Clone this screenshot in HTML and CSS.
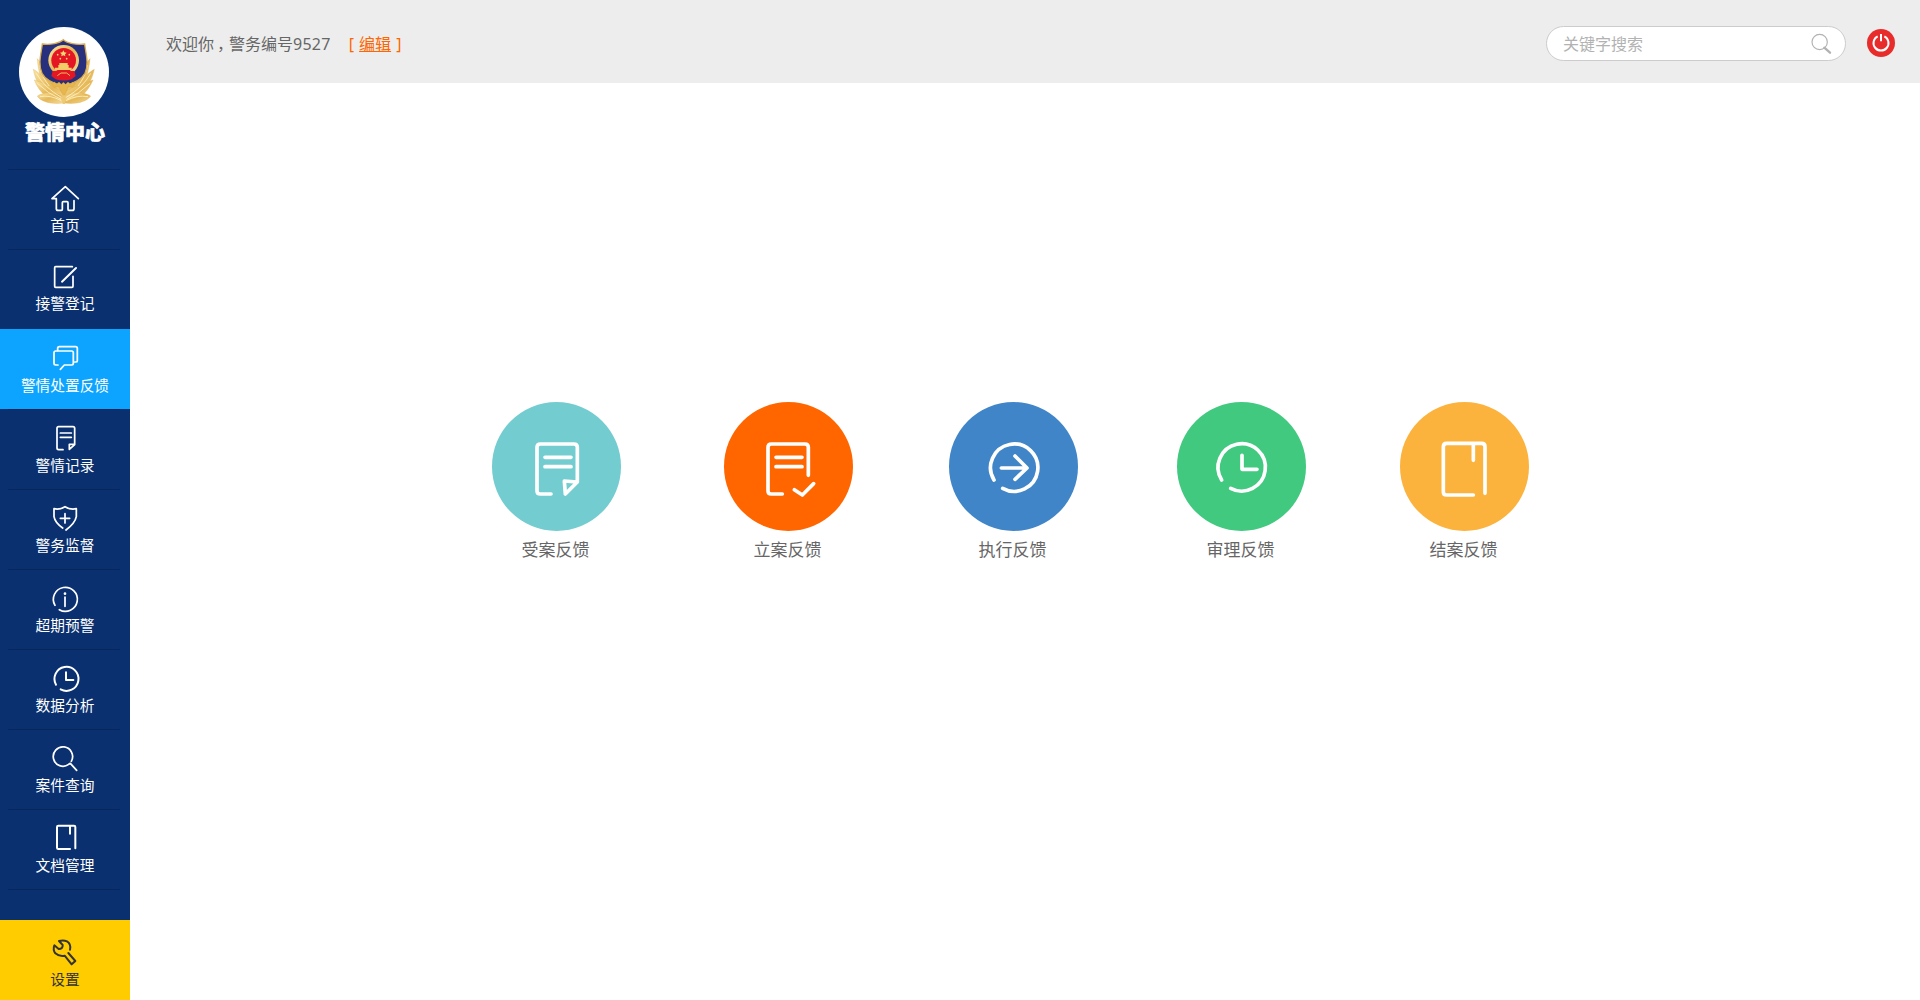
FILE: index.html
```html
<!DOCTYPE html>
<html lang="zh-CN">
<head>
<meta charset="utf-8">
<title>警情中心</title>
<link rel="stylesheet" href="styles.css">
</head>
<body>
<div class="app">
  <aside class="sidebar">
    <div class="brand">
      <svg class="emblem" viewBox="57 81 270 270">
        <defs>
          <linearGradient id="gold" x1="0" y1="0" x2="1" y2="1">
            <stop offset="0" stop-color="#fae6a6"/><stop offset=".5" stop-color="#e6b858"/><stop offset="1" stop-color="#f6dc98"/>
          </linearGradient>
        </defs>
        <circle cx="192" cy="216" r="135" fill="#fff"/>
        <g fill="url(#gold)" stroke="#dcab50" stroke-width="1">
          <path d="M190 304C158 300 118 262 112 176C130 192 134 222 150 240L190 262Z"/>
          <path d="M192 304C224 300 262 262 270 176C252 192 246 222 232 240L192 262Z"/>
          <path d="M190 308C152 302 112 272 100 208C120 218 136 246 190 268Z"/>
          <path d="M192 308C230 302 268 272 283 208C262 218 246 246 192 268Z"/>
          <path d="M190 306C150 306 118 280 103 240C130 250 160 258 190 276Z"/>
          <path d="M192 306C232 306 262 280 279 240C252 250 224 258 192 276Z"/>
          <path d="M190 309C158 314 122 306 112 288C132 276 164 274 190 290Z"/>
          <path d="M192 309C226 314 260 306 272 288C250 276 218 274 192 290Z"/>
        </g>
        <g fill="none" stroke="#fff3c8" stroke-width="2.500">
          <path d="M109 220Q132 262 184 292M272 220Q249 262 199 292M112 250Q145 282 183 298M270 250Q237 282 200 298M118 195Q125 232 148 258M263 195Q255 232 234 258M120 290Q150 284 184 302M264 290Q232 284 198 302"/>
        </g>
        <path d="M190 119C178 130 152 135 127 132C124 160 113 190 126 220C136 240 160 248 190 260C220 248 244 240 255 220C268 190 257 160 254 132C229 135 202 130 190 119Z" fill="#26307c" stroke="#d8aa50" stroke-width="4"/>
        <circle cx="191" cy="181" r="46" fill="url(#gold)"/>
        <circle cx="191" cy="181" r="37" fill="#e51624"/>
        <path d="M158 213L154 228L167 238Q191 245 215 238L227 228L223 213Z" fill="#e51624"/>
        <path d="M190 151L193 157L200 158L195 163L196 169L190 166L184 169L185 163L180 158L187 157Z" fill="#f7dc72"/>
        <g fill="#f7dc72"><circle cx="173" cy="164" r="2.500"/><circle cx="208" cy="164" r="2.500"/><circle cx="181" cy="176" r="2.500"/><circle cx="200" cy="176" r="2.500"/></g>
        <path d="M178 189H203V195H206V203H215V210H165V203H175V195H178Z" fill="#f2cc66"/>
        <path d="M172 227L183 219H200L210 227" fill="none" stroke="#eebf5b" stroke-width="3"/>
        <path d="M154 251L163 246L170 252L177 246L184 253L190 247L197 253L204 246L211 252L219 246L226 251L218 262L205 259L200 272L192 290L182 272L176 259L163 262Z" fill="#e7b64d" stroke="#cf9a3c" stroke-width="1"/>
        <path d="M186 286H197L195 312H188Z" fill="#efc873"/>
      </svg>
      <h1 class="brand-name">警情中心</h1>
    </div>
    <nav class="menu">
      <a class="item"><svg class="icon" viewBox="135 69 120 90"><path d="M156 116L196 80L235 116M157 116H169V146Q169 151 174 151H184Q187 151 187 148V128Q187 125 190 125H201Q204 125 204 128V148Q204 151 207 151H217Q222 151 222 146V122"/></svg><span>首页</span></a>
      <a class="item item-raised"><svg class="icon" viewBox="135 309 120 90"><path d="M217 320H167Q164 320 164 323V379Q164 382 167 382H216Q219 382 219 379V349"/><path class="bold" d="M186 365L228 324"/></svg><span>接警登记</span></a>
      <a class="item active"><svg class="icon" viewBox="135 69 120 90"><path d="M173 91V85Q173 80 178 80H227Q232 80 232 85V122Q232 126 227 126H224"/><path d="M174 135H167Q162 135 162 130V98Q162 93 167 93H215Q220 93 220 98V130Q220 135 215 135H193L181 148"/></svg><span>警情处置反馈</span></a>
      <a class="item"><svg class="icon" viewBox="135 309 120 90"><path d="M189 389H176Q171 389 171 384V325Q171 320 176 320H219Q224 320 224 325V374L208 388V373H222M181 339H214M181 352H214"/></svg><span>警情记录</span></a>
      <a class="item"><svg class="icon" viewBox="135 69 120 90"><path d="M188 144Q165 128 162 110V86Q179 90 195 80Q211 90 229 86V110Q225 130 198 150M181 115H209M195 101V129"/></svg><span>警务监督</span></a>
      <a class="item"><svg class="icon" viewBox="135 309 120 90"><path d="M165 376A36 36 0 1 1 178 389M195 351V379"/><circle class="dot" cx="195" cy="341" r="4"/></svg><span>超期预警</span></a>
      <a class="item"><svg class="icon" viewBox="135 69 120 90"><path class="bold" d="M168 134A36 36 0 1 1 182 148M198 97V120H220"/></svg><span>数据分析</span></a>
      <a class="item"><svg class="icon" viewBox="135 309 120 90"><path d="M214 364A29 29 0 1 0 206 373L211 370L230 391"/></svg><span>案件查询</span></a>
      <a class="item"><svg class="icon" viewBox="135 69 120 90"><path class="bold" d="M210 147H175Q171 147 171 143V81Q171 77 175 77H222Q226 77 226 81V145M210 78V101"/></svg><span>文档管理</span></a>
    </nav>
    <a class="settings"><svg class="icon" viewBox="135 402 120 90"><path class="bold" d="M210 449Q214 432 201 424Q190 419 177 423L188 435Q189 447 176 447L163 436Q158 449 166 460Q177 470 194 467L215 493L226 483L205 459"/></svg><span>设置</span></a>
  </aside>
  <div class="page">
    <header class="topbar">
      <p class="welcome">欢迎你<span class="comma">，</span>警务编号<span class="number">9527</span></p>
      <p class="edit">[ <a class="edit-link">编辑</a> ]</p>
      <div class="search">
        <span class="search-hint">关键字搜索</span>
        <svg class="search-icon" viewBox="874 101 60 60"><circle cx="900" cy="125" r="23"/><path d="M914 142L931 157"/></svg>
      </div>
      <svg class="power" viewBox="1041 87 84 84"><circle cx="1083" cy="129" r="42"/><path d="M1073 109A22.500 22.500 0 1 0 1093 109M1083 102V124"/></svg>
    </header>
    <main class="stages">
      <a class="stage stage-accept"><svg class="disc" viewBox="36 36 387 387"><path d="M213 312H181Q171 312 171 302V172Q171 162 181 162H282Q292 162 292 172V276L256 312L253 273L291 276M195 202H273M195 230H273"/></svg><span>受案反馈</span></a>
      <a class="stage stage-file"><svg class="disc" viewBox="732 36 387 387"><path d="M907 312H874Q864 312 864 302V172Q864 162 874 162H975Q985 162 985 172V256M888 202H966M888 230H966M943 299L967 315L1001 281"/></svg><span>立案反馈</span></a>
      <a class="stage stage-execute"><svg class="disc" viewBox="87 36 387 387"><path d="M222 270A71 71 0 1 1 248 295M244 234H320M285 198L321 234L285 268"/></svg><span>执行反馈</span></a>
      <a class="stage stage-review"><svg class="disc" viewBox="771 36 387 387"><path d="M905 270A71 71 0 1 1 932 295M966 196V238H1011"/></svg><span>审理反馈</span></a>
      <a class="stage stage-close"><svg class="disc" viewBox="60 36 387 387"><path d="M280 315H200Q190 315 190 305V170Q190 160 200 160H305Q315 160 315 170V310M280 162V211"/></svg><span>结案反馈</span></a>
    </main>
  </div>
</div>
</body>
</html>
```
FILE: styles.css
```css
* { box-sizing: border-box; }
body {
  margin: 0;
  font-family: "Noto Sans", "Noto Sans CJK SC", sans-serif;
  color: #666;
}
.app { display: flex; height: 1000px; background: #fff; }
svg { display: block; overflow: visible; flex: none; }
span { white-space: nowrap; }

.sidebar {
  width: 130px;
  flex: none;
  display: flex;
  flex-direction: column;
  background: #0a3070;
  color: #fff;
}
.brand {
  height: 169px;
  padding-top: 27px;
  display: flex;
  flex-direction: column;
  align-items: center;
}
.emblem { width: 90px; height: 90px; margin-right: 2px; }
.brand-name {
  margin: 0;
  font: 900 20px/30px "Noto Sans CJK SC", sans-serif;
  -webkit-text-stroke: 0.6px #fff;
}
.menu { height: 751px; }
.item, .settings {
  height: 80px;
  display: flex;
  flex-direction: column;
  align-items: center;
  font-size: 14.7px;
  line-height: 20px;
}
.item {
  padding-top: 14px;
  gap: 2px;
  background: linear-gradient(#06265c, #06265c) 8px 0 / 112px 1px no-repeat;
}
.item:last-child {
  height: 81px;
  background: linear-gradient(#06265c, #06265c) 8px 0 / 112px 1px no-repeat,
    linear-gradient(#06265c, #06265c) 8px 80px / 112px 1px no-repeat;
}
.item-raised { gap: 0; }
.active { background: #0ca4ff; }
.icon {
  width: 40px;
  height: 30px;
  fill: none;
  stroke: currentColor;
  stroke-width: 5.2;
  stroke-linecap: round;
  stroke-linejoin: round;
}
.bold { stroke-width: 6; }
.dot { fill: currentColor; stroke: none; }
.settings {
  padding-top: 14px;
  gap: 5px;
  background: #fc0;
  color: #333;
}

.page { flex: 1; }
.topbar {
  height: 83px;
  padding: 0 25px 0 36px;
  display: flex;
  align-items: center;
  background: #ededed;
  font-size: 16px;
  line-height: 24px;
}
.welcome, .edit { margin: 5px 0 0; white-space: pre; }
.comma { padding: 0 4px 0 3px; font-feature-settings: "halt"; }
.number { letter-spacing: 0.25px; }
.edit { margin-left: 18px; color: #f60; }
.edit-link { margin: 0 1px; text-decoration: underline; }
.search {
  width: 300px;
  height: 35px;
  margin: 4px 21px 0 auto;
  padding: 0 14px 0 16px;
  display: flex;
  align-items: center;
  justify-content: space-between;
  border: 1px solid #ccc;
  border-radius: 18px;
  background: #fff;
  color: #b2b2b2;
}
.search-icon { width: 20px; height: 20px; fill: none; stroke: #b2b2b2; stroke-width: 3.5; }
.search-icon path { stroke-width: 7; stroke-linecap: round; }
.power { width: 28px; height: 28px; margin-top: 3px; fill: #e82c2c; }
.power path { fill: none; stroke: #fff; stroke-width: 6; }

.stages {
  display: flex;
  padding: 319px 0 0 362px;
}
.stage {
  width: 129px;
  display: flex;
  flex-direction: column;
  align-items: center;
  gap: 6px;
  font-size: 17px;
  line-height: 26px;
}
.stage span { margin-right: 2px; }
.disc {
  width: 129px;
  height: 129px;
  border-radius: 50%;
  fill: none;
  stroke: #fff;
  stroke-width: 11;
  stroke-linecap: round;
  stroke-linejoin: round;
}
.stage-accept { margin-right: 103px; }
.stage-accept .disc { background: #73cccf; }
.stage-file { margin-right: 96px; }
.stage-file .disc { background: #f60; }
.stage-execute { margin-right: 99px; }
.stage-execute .disc { background: #4085c8; }
.stage-review { margin-right: 94px; }
.stage-review .disc { background: #41c980; }
.stage-close .disc { background: #fbb33d; }
```
